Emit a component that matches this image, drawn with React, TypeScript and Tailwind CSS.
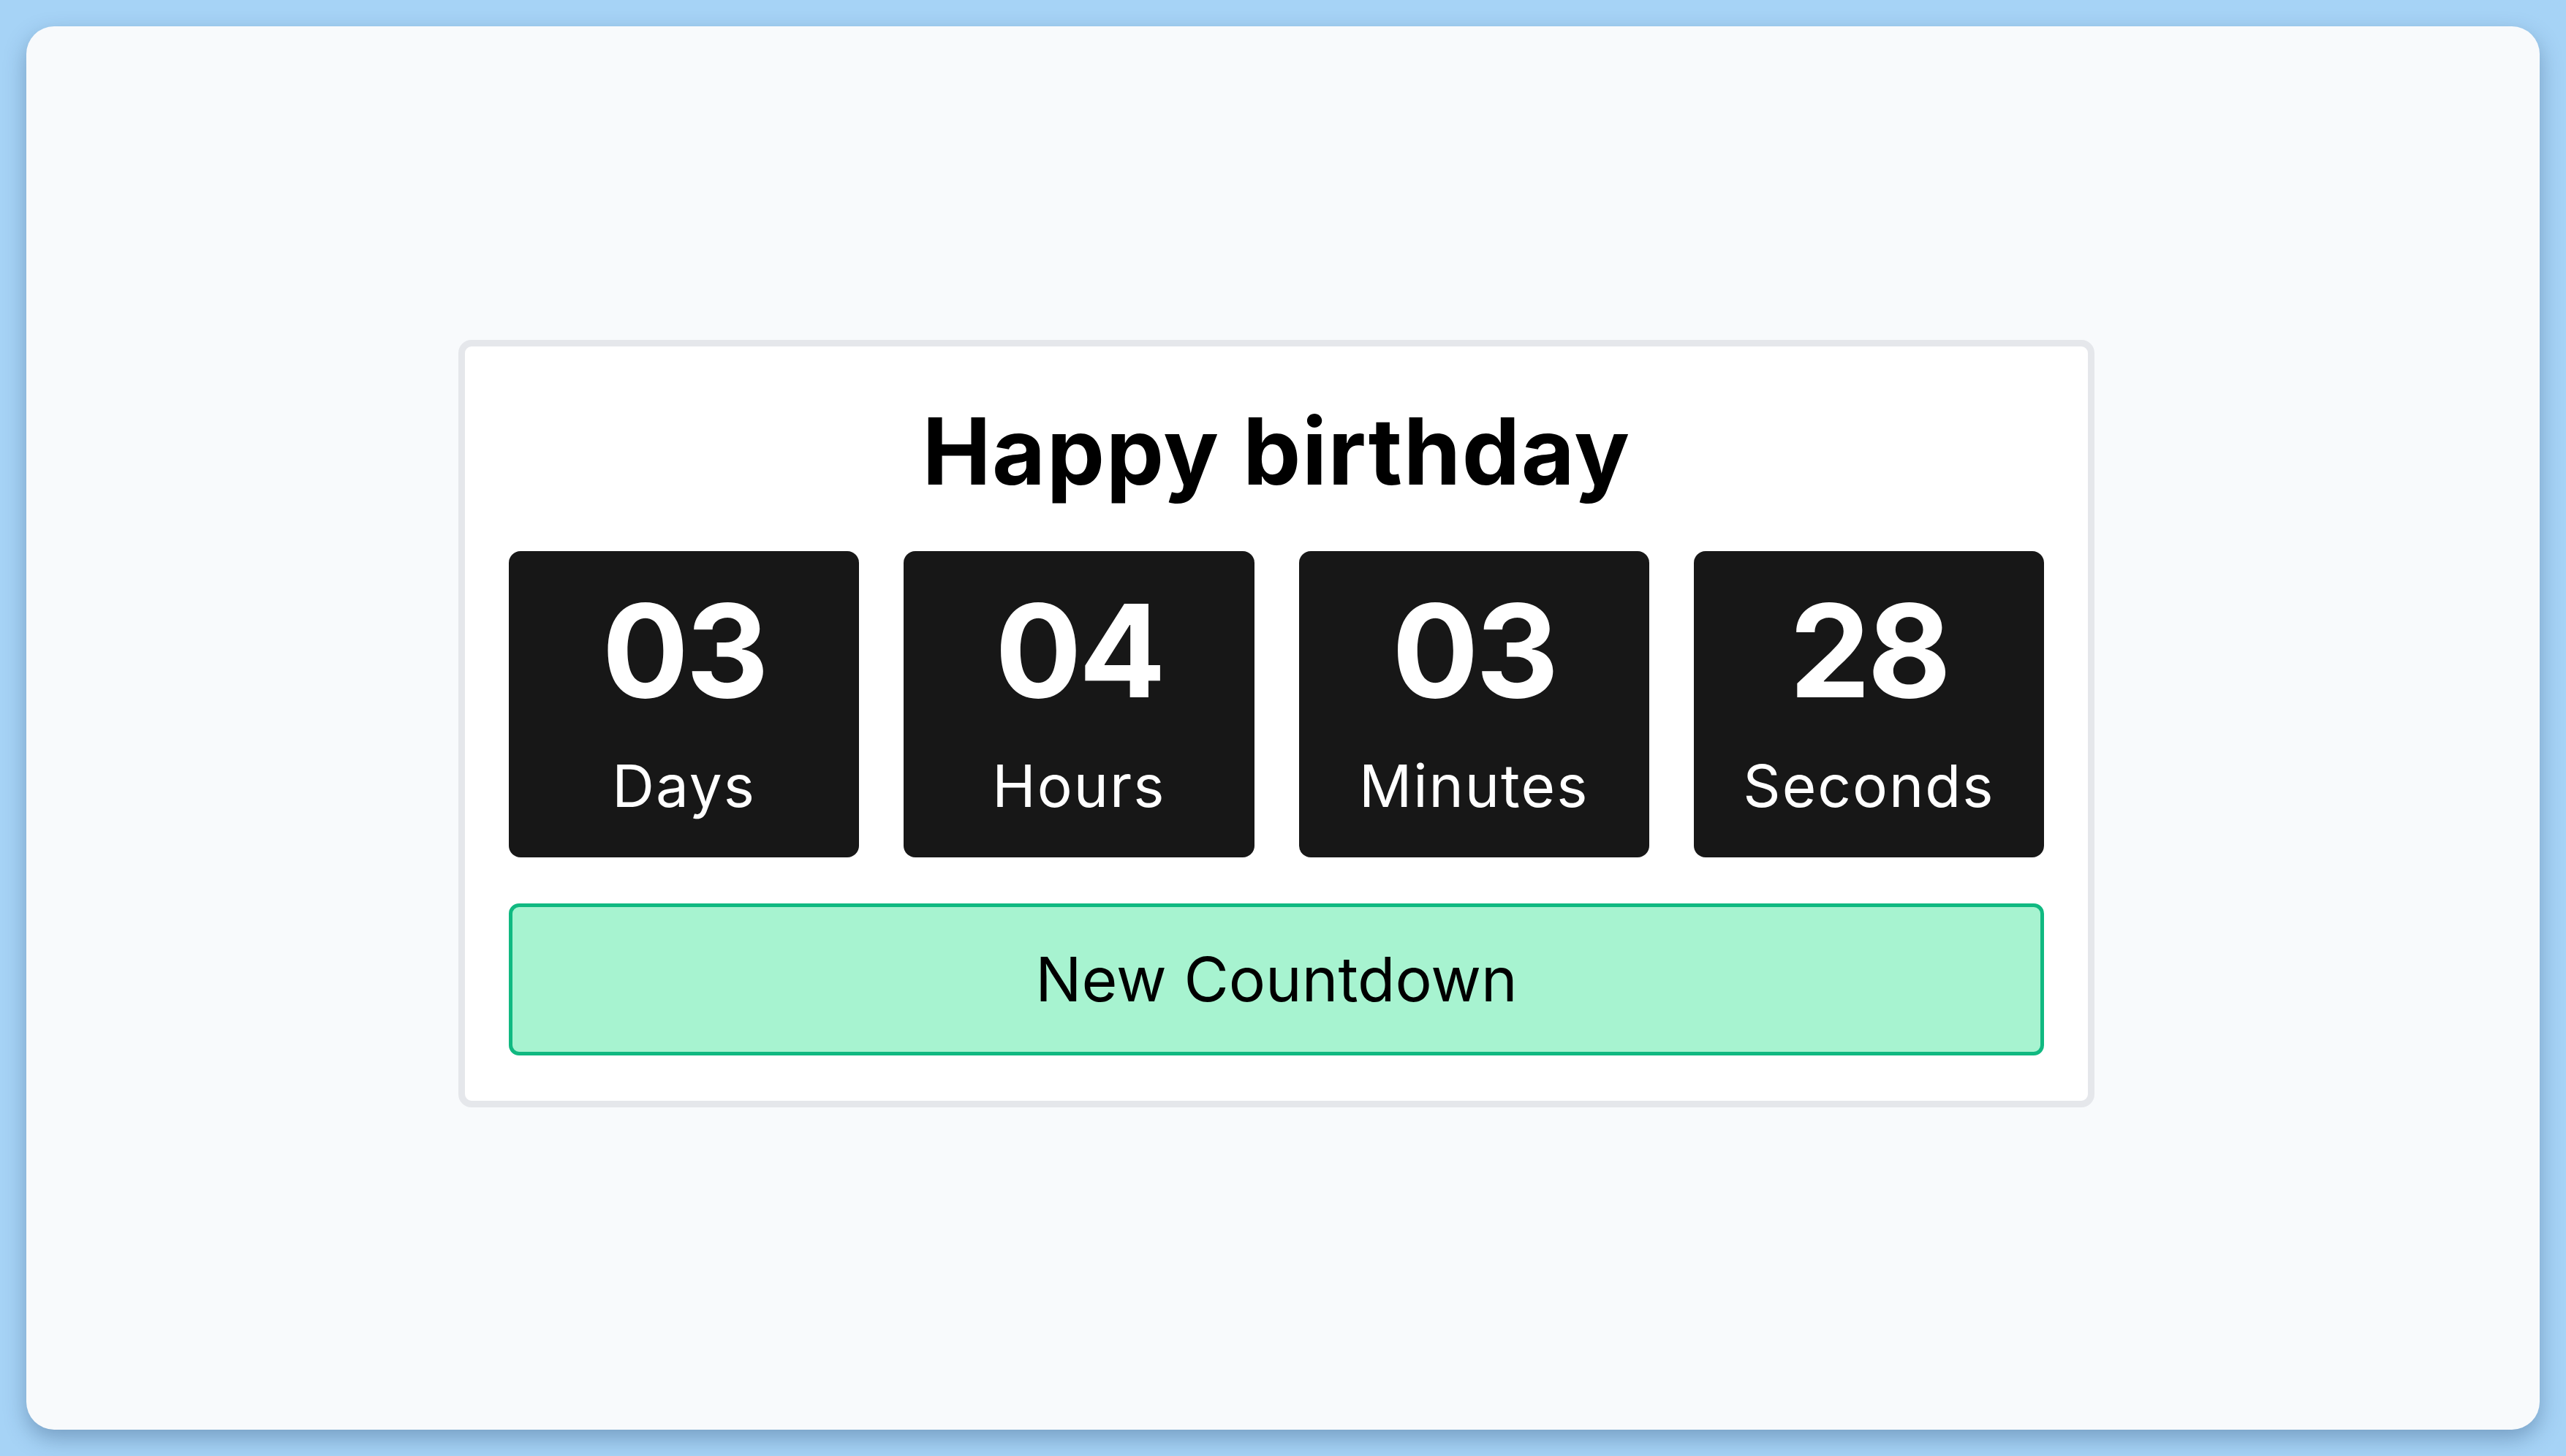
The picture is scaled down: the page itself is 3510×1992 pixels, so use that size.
const units = [
  { value: "03", label: "Days" },
  { value: "04", label: "Hours" },
  { value: "03", label: "Minutes" },
  { value: "28", label: "Seconds" },
];

function TimeBox({ value, label }: { value: string; label: string }) {
  return (
    <div className="flex h-[419px] flex-col items-center rounded-[16px] bg-[#171717] pt-[48px] text-white">
      <span className="text-[176px] font-bold leading-none tracking-[-4px]">{value}</span>
      <span className="mt-[57px] text-[80px] font-normal leading-none tracking-[2px]">{label}</span>
    </div>
  );
}

export default function App() {
  return (
    <div
      className="flex h-[1992px] w-full bg-[#a6d3f6] p-[36px]"
      style={{ fontFamily: "Inter, 'Noto Sans', sans-serif" }}
    >
      <div className="flex flex-1 items-center justify-center rounded-[38px] bg-[#f8fafc] shadow-[0_12px_30px_rgba(30,60,100,0.35)]">
        <div className="mr-[18px] mb-[12px] flex w-[2238px] flex-col rounded-[18px] border-[9px] border-[#e5e7eb] bg-white px-[60px] pt-[80px] pb-[62px]">
          <h1 className="text-center text-[126px] font-bold leading-none tracking-[1.5px] text-black">
            Happy birthday
          </h1>
          <div className="mt-[74px] grid grid-cols-4 gap-[61px]">
            {units.map((u) => (
              <TimeBox key={u.label} value={u.value} label={u.label} />
            ))}
          </div>
          <button className="mt-[63px] flex h-[208px] items-center justify-center rounded-[14px] border-[5px] border-[#10b981] bg-[#a7f3d0] text-[84px] font-normal text-black">
            New Countdown
          </button>
        </div>
      </div>
    </div>
  );
}
